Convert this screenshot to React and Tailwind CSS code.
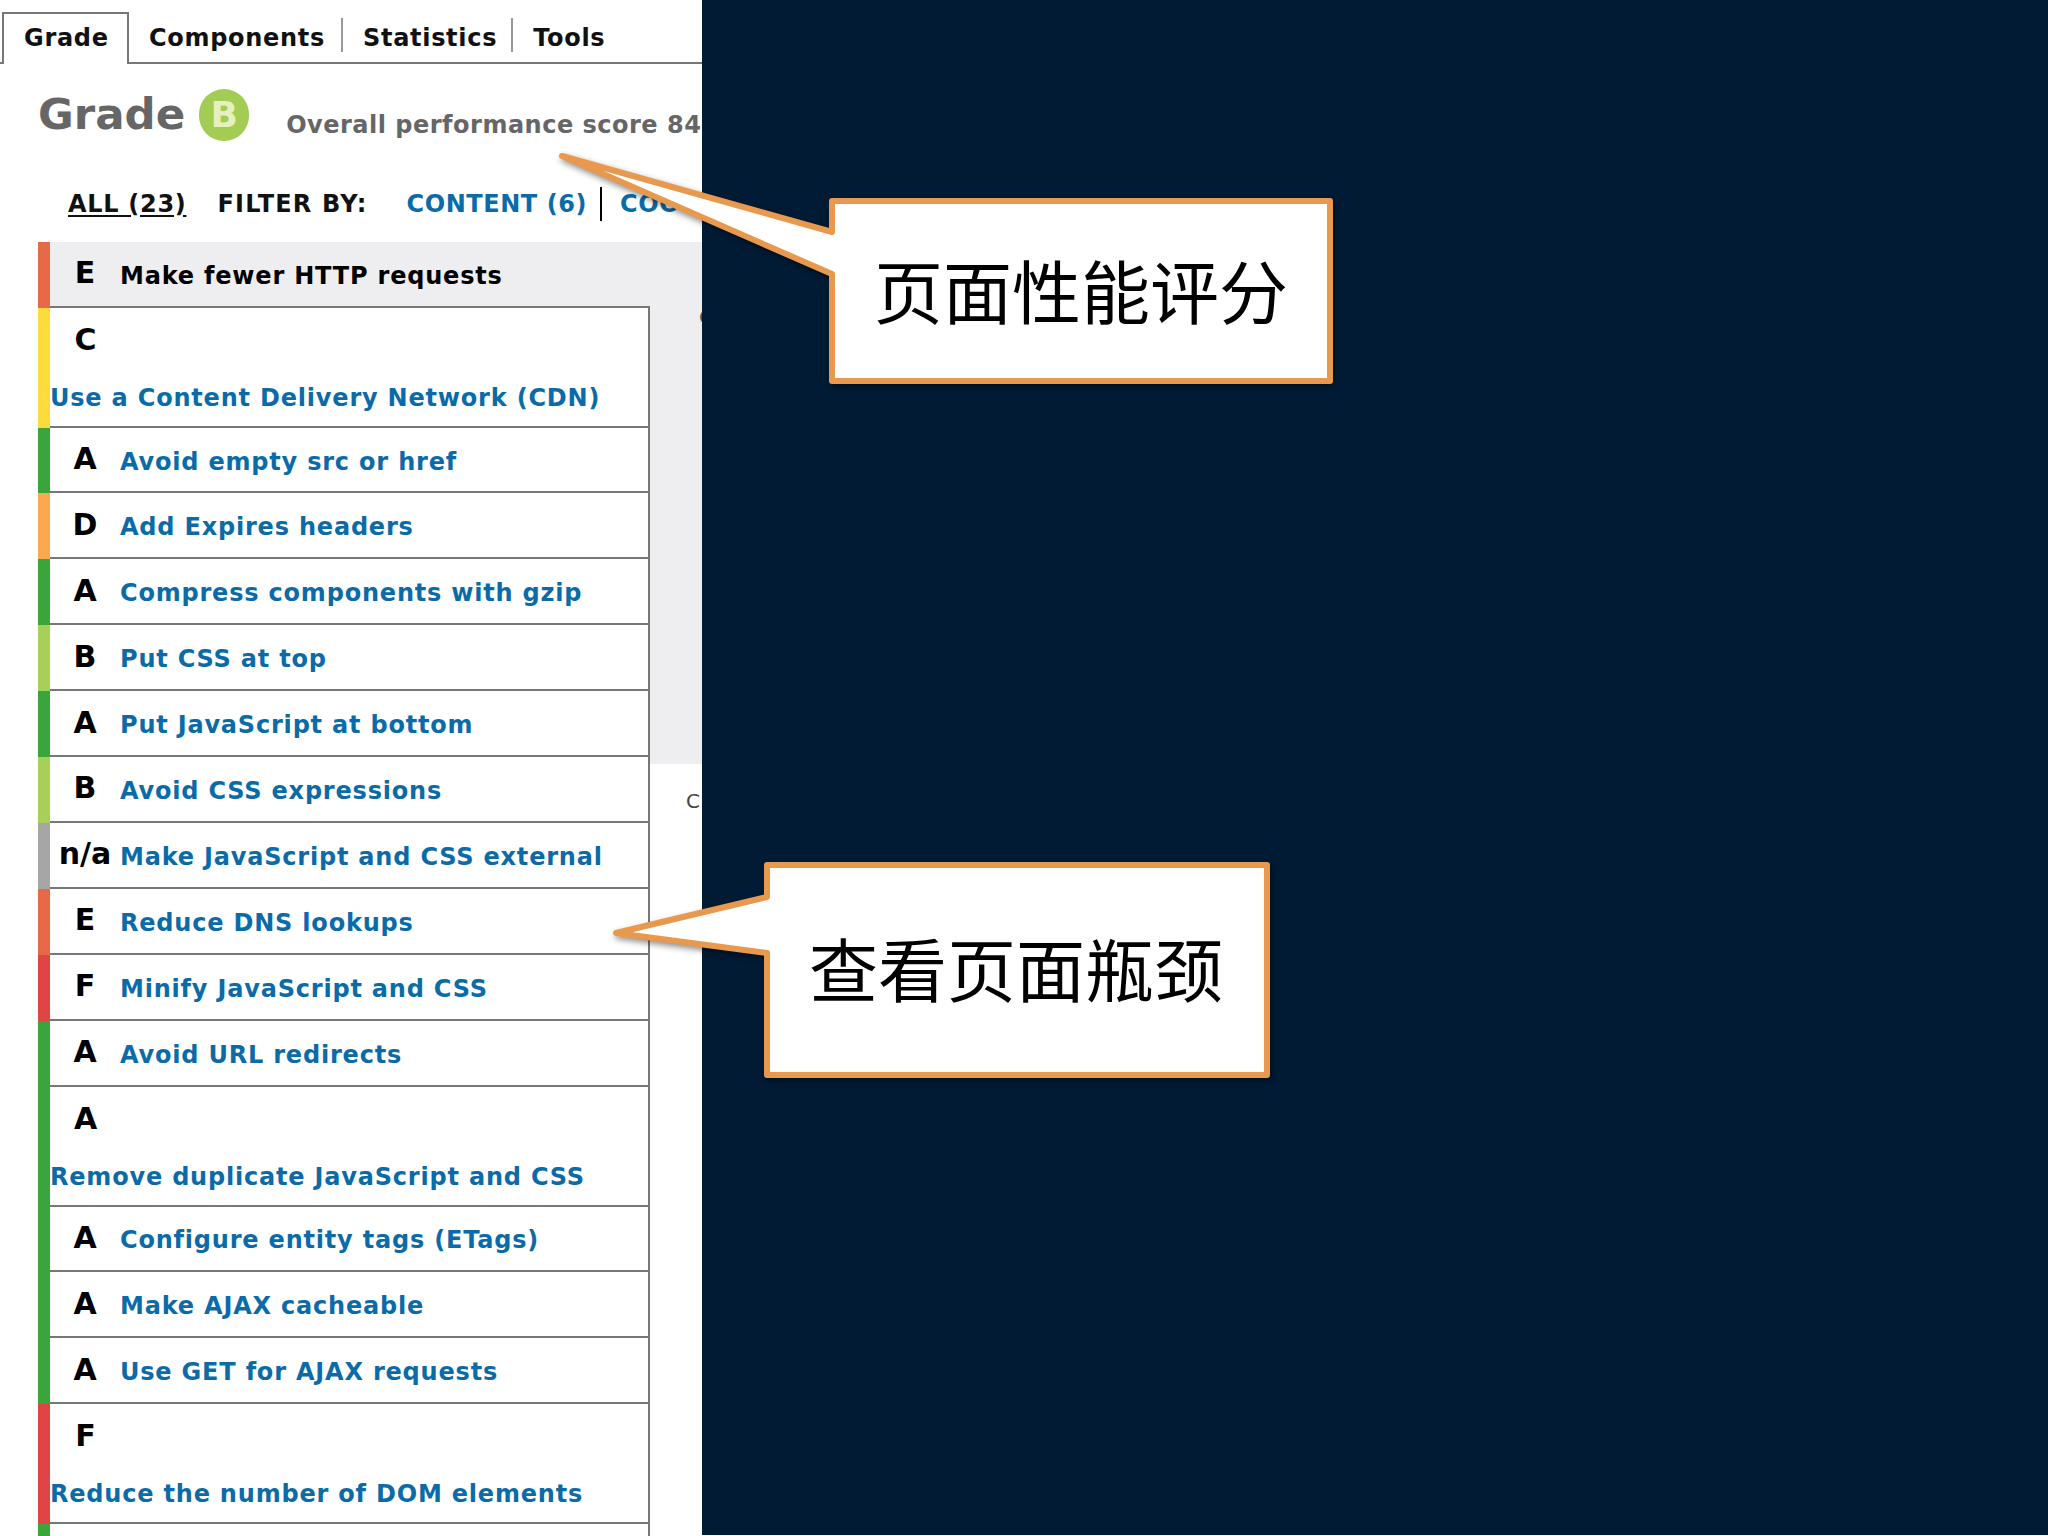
const rows = [
  { grade: 'E', color: 'bg-[#e8694a]', text: 'Make fewer HTTP requests', selected: true },
  { grade: 'C', color: 'bg-[#fcdc3c]', text: 'Use a Content Delivery Network (CDN)', tall: true },
  { grade: 'A', color: 'bg-[#3aa53a]', text: 'Avoid empty src or href' },
  { grade: 'D', color: 'bg-[#fba94f]', text: 'Add Expires headers' },
  { grade: 'A', color: 'bg-[#3aa53a]', text: 'Compress components with gzip' },
  { grade: 'B', color: 'bg-[#a8cf58]', text: 'Put CSS at top' },
  { grade: 'A', color: 'bg-[#3aa53a]', text: 'Put JavaScript at bottom' },
  { grade: 'B', color: 'bg-[#a8cf58]', text: 'Avoid CSS expressions' },
  { grade: 'n/a', color: 'bg-[#a6a6a6]', text: 'Make JavaScript and CSS external' },
  { grade: 'E', color: 'bg-[#e8694a]', text: 'Reduce DNS lookups' },
  { grade: 'F', color: 'bg-[#e04545]', text: 'Minify JavaScript and CSS' },
  { grade: 'A', color: 'bg-[#3aa53a]', text: 'Avoid URL redirects' },
  { grade: 'A', color: 'bg-[#3aa53a]', text: 'Remove duplicate JavaScript and CSS', tall: true },
  { grade: 'A', color: 'bg-[#3aa53a]', text: 'Configure entity tags (ETags)' },
  { grade: 'A', color: 'bg-[#3aa53a]', text: 'Make AJAX cacheable' },
  { grade: 'A', color: 'bg-[#3aa53a]', text: 'Use GET for AJAX requests' },
  { grade: 'F', color: 'bg-[#e04545]', text: 'Reduce the number of DOM elements', tall: true },
  { grade: '', color: 'bg-[#3aa53a]', text: '' },
];

function GradeRow({ grade, color, text, selected, tall }) {
  return (
    <div className={`flex shrink-0 ${tall ? 'h-[120px]' : selected ? 'h-[65.6px]' : 'h-[65.9px]'}`}>
      <div className={`w-[12px] shrink-0 ${color}`} />
      {tall ? (
        <div className="flex-1 border-b-2 border-r-2 border-[#777777] flex flex-col">
          <div className="w-[71px] text-center text-black font-bold text-[30px] leading-none mt-[17px]">{grade}</div>
          <div className="text-[#0b6ba8] font-bold text-[24px] tracking-[0.8px] leading-none mt-[31px]">{text}</div>
        </div>
      ) : (
        <div className={`flex-1 flex items-center ${selected ? 'border-b-2 border-[#777777] bg-[#eeeef0]' : 'border-b-2 border-r-2 border-[#777777]'}`}>
          <div className="w-[70px] shrink-0 text-center text-black font-bold text-[30px] leading-none mb-[1px]">{grade}</div>
          <div className={`${selected ? 'text-black' : 'text-[#0b6ba8]'} font-bold text-[24px] tracking-[0.8px] leading-none mt-[4px]`}>{text}</div>
        </div>
      )}
    </div>
  );
}

export default function App() {
  return (
    <div className="relative w-[2048px] h-[1536px] overflow-hidden flex bg-white font-['DejaVu_Sans',sans-serif]">
      <div className="w-[702px] shrink-0 h-full overflow-hidden whitespace-nowrap flex flex-col">
        {/* tabs */}
        <div className="h-[64px] shrink-0 border-b-2 border-[#777777] flex items-end pl-[2px] text-[#111111] font-bold text-[24px] tracking-[0.7px]">
          <div className="h-[52px] w-[127px] shrink-0 -mb-[2px] border-2 border-b-0 border-[#777777] bg-white pl-[20px] pb-[2px] flex items-center">Grade</div>
          <div className="h-[34px] mb-[10px] flex items-center pt-[5px] pl-[20px] pr-[16px] border-r-2 border-[#999999]">Components</div>
          <div className="h-[34px] mb-[10px] flex items-center pt-[5px] pl-[20px] pr-[14px] border-r-2 border-[#999999]">Statistics</div>
          <div className="h-[34px] mb-[10px] flex items-center pt-[5px] pl-[20px]">Tools</div>
        </div>

        {/* grade heading */}
        <div className="h-[100px] shrink-0 flex items-start pl-[38px]">
          <div className="text-[#666666] font-bold text-[43.5px] leading-none mt-[29px]">Grade</div>
          <div className="w-[50px] h-[52px] shrink-0 ml-[14px] mt-[25px] rounded-full bg-[#a3cc55] text-[#e6efc0] font-bold text-[36px] flex items-center justify-center">B</div>
          <div className="text-[#666666] font-bold text-[24px] tracking-[0.5px] leading-none ml-[37px] mt-[49px]">Overall performance score 84</div>
        </div>

        {/* filter */}
        <div className="h-[78px] shrink-0 flex pl-[68px] pt-[1px] items-center font-bold text-[24px] tracking-[0.7px] leading-none">
          <span className="text-[#111111] underline underline-offset-[3px]">ALL (23)</span>
          <span className="text-[#111111] ml-[31px] tracking-[1.2px]">FILTER BY:</span>
          <span className="text-[#0b6ba8] ml-[39px] tracking-[0.55px]">CONTENT (6)</span>
          <span className="w-[2px] h-[34px] shrink-0 bg-black ml-[13px]" />
          <span className="text-[#0b6ba8] ml-[18px]">COOKIE (2)</span>
        </div>

        {/* rule list and detail panel */}
        <div className="flex-1 flex pl-[38px] overflow-hidden">
          <div className="w-[612px] shrink-0 flex flex-col">
            {rows.map((row, i) => (
              <GradeRow key={i} {...row} />
            ))}
          </div>
          <div className="flex-1 flex flex-col overflow-hidden">
            <div className="h-[522px] shrink-0 bg-[#eeeef0] text-[#555555] text-[20px] leading-none pt-[65px] pl-[49px]">C</div>
            <div className="text-[#444444] text-[20px] leading-none mt-[27px] pl-[36px]">C</div>
          </div>
        </div>
      </div>

      <div className="flex-1 h-[1535px] bg-[#011b35]" />

      {/* callouts */}
      <svg className="absolute inset-0 w-[2048px] h-[1536px] drop-shadow-[2px_3px_3px_rgba(0,0,0,0.45)]" viewBox="0 0 2048 1536">
        <polygon
          points="562,156 832,232 832,201 1330,201 1330,381 832,381 832,274"
          fill="#ffffff"
          stroke="#e8994e"
          strokeWidth="6"
          strokeLinejoin="round"
        />
        <polygon
          points="616,933 767,897 767,865 1267,865 1267,1075 767,1075 767,953"
          fill="#ffffff"
          stroke="#e8994e"
          strokeWidth="6"
          strokeLinejoin="round"
        />
      </svg>
      <div className="absolute left-[874px] top-[247px] w-[414px] text-center text-black text-[69px] leading-[84px] whitespace-nowrap font-['Noto_Sans_CJK_SC',sans-serif]">页面性能评分</div>
      <div className="absolute left-[809px] top-[925px] w-[414px] text-center text-black text-[69px] leading-[84px] whitespace-nowrap font-['Noto_Sans_CJK_SC',sans-serif]">查看页面瓶颈</div>
    </div>
  );
}
